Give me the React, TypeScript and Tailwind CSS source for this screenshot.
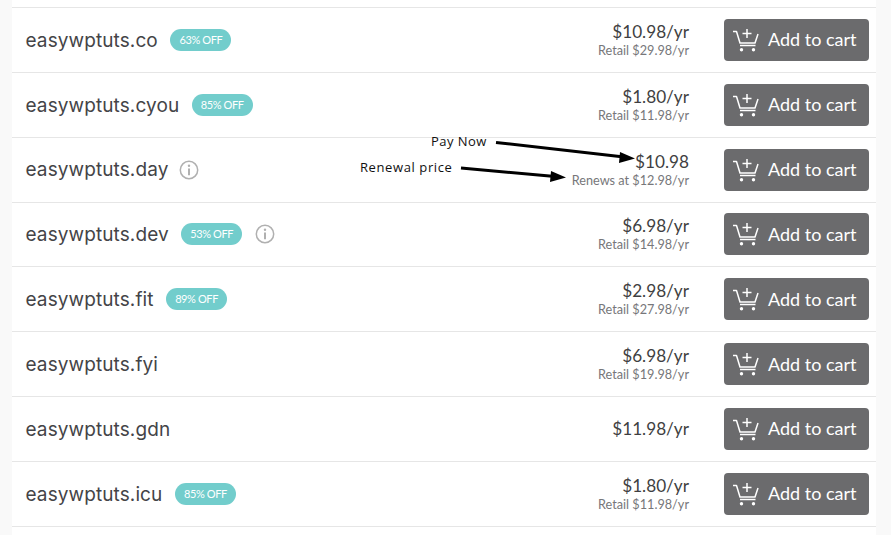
import React from 'react';

interface Domain {
  name: string;
  badge?: string;
  info?: boolean;
  price: string;
  sub?: string;
}

const domains: Domain[] = [
  { name: 'easywptuts.co', badge: '63% OFF', price: '$10.98/yr', sub: 'Retail $29.98/yr' },
  { name: 'easywptuts.cyou', badge: '85% OFF', price: '$1.80/yr', sub: 'Retail $11.98/yr' },
  { name: 'easywptuts.day', info: true, price: '$10.98', sub: 'Renews at $12.98/yr' },
  { name: 'easywptuts.dev', badge: '53% OFF', info: true, price: '$6.98/yr', sub: 'Retail $14.98/yr' },
  { name: 'easywptuts.fit', badge: '89% OFF', price: '$2.98/yr', sub: 'Retail $27.98/yr' },
  { name: 'easywptuts.fyi', price: '$6.98/yr', sub: 'Retail $19.98/yr' },
  { name: 'easywptuts.gdn', price: '$11.98/yr' },
  { name: 'easywptuts.icu', badge: '85% OFF', price: '$1.80/yr', sub: 'Retail $11.98/yr' },
];

function CartIcon() {
  return (
    <svg width="26" height="24" viewBox="0 0 26 24" fill="none" stroke="white" strokeWidth="1.5" className="shrink-0">
      <path d="M0 3.5h3.5l3.5 11.5h15l3-9" strokeLinejoin="round" />
      <path d="M7 17.5h15.5" />
      <path d="M14 1v9M9.5 5.5h9" />
      <circle cx="8.5" cy="21.8" r="1.7" fill="white" stroke="none" />
      <circle cx="20.5" cy="21.8" r="1.7" fill="white" stroke="none" />
    </svg>
  );
}

function InfoIcon() {
  return (
    <svg width="20" height="20" viewBox="0 0 20 20" fill="none" className="shrink-0">
      <circle cx="10" cy="10" r="8.7" stroke="#b0b0b0" strokeWidth="1.5" />
      <circle cx="10" cy="5.8" r="1.2" fill="#b0b0b0" />
      <path d="M10 8.6v6.6" stroke="#b0b0b0" strokeWidth="2" />
    </svg>
  );
}

function Row({ d }: { d: Domain }) {
  return (
    <div className="h-[64.85px] border-t border-[#e6e6e6] flex items-center pl-[13.5px] pr-[7px]">
      <span className="pt-[2px] text-[19px] tracking-[0.1px] text-[#444447] font-['Inter',sans-serif]">{d.name}</span>
      {d.badge && (
        <span className="ml-[12.5px] h-[22px] w-[61px] rounded-full bg-[#72cdcc] text-white text-[11px] tracking-[-0.4px] flex items-center justify-center font-['Lato',sans-serif]">
          {d.badge}
        </span>
      )}
      {d.info && (
        <span className={d.badge ? 'ml-[12.5px]' : 'ml-[11px]'}>
          <InfoIcon />
        </span>
      )}
      <div className="ml-auto mr-[35px] text-right font-['Lato',sans-serif]">
        <div className="text-[17.2px] leading-[21px] text-[#3f3f42]">{d.price}</div>
        {d.sub && <div className="text-[12.7px] leading-[17px] text-[#77777a]">{d.sub}</div>}
      </div>
      <button className="w-[145px] h-[42px] rounded-[4px] bg-[#6b6b6d] flex items-center pl-[9px] gap-[9px] text-white text-[18px] font-['Lato',sans-serif]">
        <CartIcon />
        Add to cart
      </button>
    </div>
  );
}

export default function App() {
  return (
    <div className="relative h-[535px] w-[891px] overflow-hidden bg-[#f9f9f9] px-[12px] pr-[15px]">
      <div className="h-full bg-white pt-[7px]">
        {domains.map((d) => (
          <Row key={d.name} d={d} />
        ))}
        <div className="border-t border-[#e6e6e6]" />
      </div>

      {/* annotations pasted over the list */}
      <span className="absolute left-[431px] top-[132px] text-[13px] tracking-[0.45px] text-[#111] font-['Open_Sans',sans-serif]">Pay Now</span>
      <span className="absolute left-[360px] top-[158px] text-[13px] tracking-[0.6px] text-[#111] font-['Open_Sans',sans-serif]">Renewal price</span>
      <svg className="absolute left-0 top-0" width="891" height="535" fill="none">
        <path d="M496 142.5 L624 157" stroke="black" strokeWidth="3" />
        <path d="M635 158.5 L620 152 L619 163 Z" fill="black" />
        <path d="M461 168 L555 176.5" stroke="black" strokeWidth="3" />
        <path d="M566 177.5 L551 171 L550 182 Z" fill="black" />
      </svg>
    </div>
  );
}
